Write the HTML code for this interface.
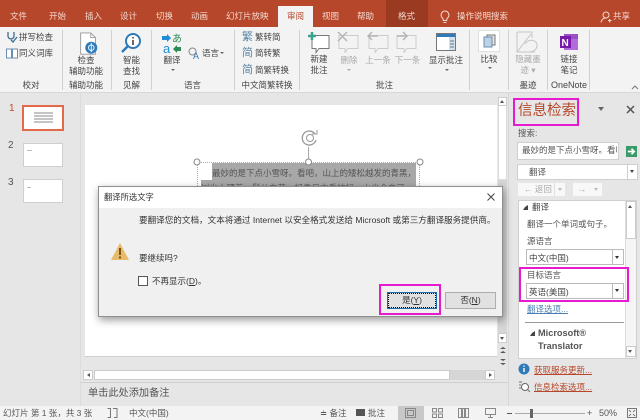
<!DOCTYPE html>
<html><head><meta charset="utf-8">
<style>
html,body{margin:0;padding:0}
#r{position:relative;width:640px;height:420px;overflow:hidden;background:#e6e6e6;font-family:"Liberation Sans","Noto Sans CJK SC",sans-serif;font-size:8.500px;color:#444;filter:blur(.3px)}
#r div,#r svg{position:absolute}
.t{white-space:nowrap;line-height:12px}
.c{text-align:center;white-space:nowrap;line-height:12px}
.tab{top:10px;color:#f3d9d0;font-size:8.500px;line-height:12px;white-space:nowrap}
.sep{top:30px;width:1px;height:60px;background:#d0d0d0}
.g{color:#aaa}
</style></head><body><div id="r">
<!-- title bar -->
<div style="left:0;top:0;width:640px;height:27px;background:#b7472a"></div>
<div style="left:278px;top:6px;width:35px;height:22px;background:#f3f3f3"></div>
<div style="left:386px;top:0;width:42px;height:27px;background:#9a3a20"></div>
<div class="tab" style="left:10px">文件</div>
<div class="tab" style="left:49px">开始</div>
<div class="tab" style="left:85px">插入</div>
<div class="tab" style="left:120px">设计</div>
<div class="tab" style="left:156px">切换</div>
<div class="tab" style="left:191px">动画</div>
<div class="tab" style="left:226px">幻灯片放映</div>
<div class="tab" style="left:287px;color:#b7472a">审阅</div>
<div class="tab" style="left:322px">视图</div>
<div class="tab" style="left:357px">帮助</div>
<div class="tab" style="left:398px">格式</div>
<svg style="left:438px;top:10px" width="14" height="14" viewBox="0 0 14 14"><path d="M7 1a4 4 0 0 0-2.500 7c.7.700.8 1.500.8 2.500h3.400c0-1 .1-1.800.8-2.500A4 4 0 0 0 7 1zM5.500 12.500h3" fill="none" stroke="#f3d9d0"/></svg>
<div class="tab" style="left:457px">操作说明搜索</div>
<svg style="left:600px;top:11px" width="12" height="12" viewBox="0 0 12 12"><circle cx="6" cy="4" r="3" fill="none" stroke="#f3d9d0"/><path d="M1 11.500c.5-3 2.500-4.500 5-4.500M8 9.500h3.500M9.700 8v3.500" fill="none" stroke="#f3d9d0"/></svg>
<div class="tab" style="left:613px;top:10px">共享</div>

<!-- ribbon -->
<div style="left:0;top:27px;width:640px;height:65px;background:#f3f3f3;border-bottom:1px solid #d8d8d8"></div>
<div class="sep" style="left:62px"></div>
<div class="sep" style="left:111px"></div>
<div class="sep" style="left:151px"></div>
<div class="sep" style="left:234px"></div>
<div class="sep" style="left:299px"></div>
<div class="sep" style="left:469px"></div>
<div class="sep" style="left:508px"></div>
<div class="sep" style="left:547px"></div>
<div class="sep" style="left:589px"></div>

<!-- proofing -->
<svg style="left:6px;top:31px" width="12" height="12" viewBox="0 0 12 12"><path d="M2 1v4a3 3 0 0 0 6 0V1M5 9l2 2 4-5" fill="none" stroke="#3f6f8f" stroke-width="1.300"/></svg>
<div class="t" style="left:19px;top:31px">拼写检查</div>
<svg style="left:6px;top:48px" width="12" height="11" viewBox="0 0 12 11"><path d="M.5 1h5v9h-5zM6.500 1h5v9h-5z" fill="#fff" stroke="#6a8fb0"/></svg>
<div class="t" style="left:19px;top:47px">同义词库</div>
<div class="c" style="left:0;width:62px;top:79px">校对</div>

<!-- accessibility -->
<svg style="left:78px;top:32px" width="21" height="24" viewBox="0 0 22 26"><path d="M2.500 1h11l5 5v18h-16z" fill="#fff" stroke="#999"/><path d="M13.500 1v5h5" fill="none" stroke="#999"/><circle cx="14" cy="17" r="6.500" fill="#2f7ab8"/><circle cx="14" cy="17" r="3" fill="none" stroke="#fff"/><path d="M14 12v10" stroke="#fff"/></svg>
<div class="c" style="left:65px;width:42px;top:55px;line-height:10.500px">检查<br>辅助功能</div>
<div class="c" style="left:65px;width:42px;top:79px">辅助功能</div>

<!-- insights -->
<svg style="left:120px;top:32px" width="22" height="22" viewBox="0 0 22 22"><circle cx="13" cy="9" r="7" fill="#fff" stroke="#2f7ab8" stroke-width="2"/><path d="M8 14l-6 6" stroke="#2f7ab8" stroke-width="2.500"/><path d="M13 8v5M13 5v1.500" stroke="#444" stroke-width="1.600"/></svg>
<div class="c" style="left:114px;width:35px;top:55px;line-height:10.500px">智能<br>查找</div>
<div class="c" style="left:114px;width:35px;top:79px">见解</div>

<!-- language -->
<svg style="left:161px;top:32px" width="22" height="22" viewBox="0 0 22 22"><text x="11" y="10" font-size="10" fill="#2e8b57" font-family="Noto Sans CJK JP">あ</text><text x="2" y="21" font-size="13" fill="#1e8dd6" font-family="Liberation Sans">a</text><path d="M1 4h5V2l4 4-4 4V8H1z" fill="#1e8dd6"/><path d="M20 15v4h-4v2l-4-4 4-4v2z" fill="#2e8b57"/></svg>
<div class="c" style="left:155px;width:34px;top:54px">翻译</div>
<div style="left:171px;top:69px;border:2px solid transparent;border-top:2px solid #666"></div>
<svg style="left:188px;top:47px" width="13" height="13" viewBox="0 0 13 13"><circle cx="4.500" cy="4.500" r="3.500" fill="none" stroke="#888"/><text x="5" y="12" font-size="9" fill="#2f7ab8" font-family="Liberation Sans">A</text></svg>
<div class="t" style="left:202px;top:47px">语言</div>
<div style="left:220px;top:52px;border:2px solid transparent;border-top:2px solid #666"></div>
<div class="c" style="left:151px;width:83px;top:79px">语言</div>

<!-- chinese conversion -->
<div class="t" style="left:242px;top:31px;color:#5b87a8;font-size:11px">繁</div>
<div class="t" style="left:255px;top:31px">繁转简</div>
<div class="t" style="left:242px;top:47px;color:#5b87a8;font-size:11px">简</div>
<div class="t" style="left:255px;top:47px">简转繁</div>
<div class="t" style="left:242px;top:64px;color:#5b87a8;font-size:11px">简</div>
<div class="t" style="left:255px;top:64px">简繁转换</div>
<div class="c" style="left:236px;width:62px;top:79px">中文简繁转换</div>

<!-- comments -->
<svg style="left:306px;top:31px" width="24" height="24" viewBox="0 0 24 24"><path d="M6 4.500h17v13H13l-3 4v-4H6z" fill="#fff" stroke="#777"/><path d="M6 1v8M2 5h8" stroke="#3aa28d" stroke-width="2.500"/></svg>
<div class="c" style="left:304px;width:30px;top:54px;line-height:11px">新建<br>批注</div>
<svg style="left:337px;top:31px" width="22" height="22" viewBox="0 0 22 22"><path d="M2 4.500h19v13H11l-3 4v-4H2z" fill="none" stroke="#ccc"/><path d="M1 1l9 9M10 1l-9 9" stroke="#b5b5b5" stroke-width="1.500"/></svg>
<div class="c g" style="left:333px;width:32px;top:54px">删除</div>
<div style="left:347px;top:69px;border:2px solid transparent;border-top:2px solid #aaa"></div>
<svg style="left:367px;top:31px" width="22" height="22" viewBox="0 0 22 22"><path d="M2 4.500h19v13H11l-3 4v-4H2z" fill="none" stroke="#ccc"/><path d="M11 5H2M5 1L1 5l4 4" fill="none" stroke="#b5b5b5" stroke-width="1.500"/></svg>
<div class="c g" style="left:364px;width:28px;top:54px">上一条</div>
<svg style="left:396px;top:31px" width="22" height="22" viewBox="0 0 22 22"><path d="M1 4.500h19v13H11l-3 4v-4H1z" fill="none" stroke="#ccc"/><path d="M1 5h9M7 1l4 4-4 4" fill="none" stroke="#b5b5b5" stroke-width="1.500"/></svg>
<div class="c g" style="left:393.500px;width:28px;top:54px">下一条</div>
<svg style="left:436px;top:33px" width="20" height="18" viewBox="0 0 20 18"><rect x=".5" y=".5" width="19" height="17" fill="#fff" stroke="#777"/><rect x="1" y="1" width="18" height="3" fill="#2f7ab8"/><rect x="13" y="4" width="6" height="13" fill="#cfe0ef"/><path d="M14 8h4M14 11h4M14 14h4" stroke="#777"/></svg>
<div class="c" style="left:426px;width:40px;top:54px">显示批注</div>
<div style="left:445px;top:69px;border:2px solid transparent;border-top:2px solid #666"></div>
<div class="c" style="left:300px;width:169px;top:79px">批注</div>

<!-- compare -->
<div style="left:478px;top:30px;width:20px;height:20px;background:#fff;border:1px solid #e0e0e0"></div>
<svg style="left:483px;top:34px" width="13" height="14" viewBox="0 0 13 14"><path d="M4 1h8v10H4z" fill="#e5e5e5" stroke="#777"/><path d="M1 3h8v10H1z" fill="#bcd3e6" stroke="#6a8fb0"/></svg>
<div class="c" style="left:471px;width:36px;top:53px">比较</div>
<div style="left:488px;top:67px;border:2px solid transparent;border-top:2px solid #666"></div>

<!-- ink -->
<svg style="left:516px;top:31px" width="24" height="22" viewBox="0 0 24 22"><path d="M1 1h15v6M1 1v20h18M1 21L15 3M9 13c4-6 12-4 12 1s-4 7-8 7" fill="none" stroke="#c4c4c4"/></svg>
<div class="c g" style="left:511px;width:34px;top:54px;line-height:11px">隐藏墨<br>迹 ▾</div>
<div class="c" style="left:511px;width:34px;top:79px">墨迹</div>

<!-- onenote -->
<svg style="left:559px;top:33px" width="20" height="18" viewBox="0 0 20 18"><rect x="5" y="1" width="14" height="16" fill="#b46ad8"/><rect x="5" y="1" width="14" height="5" fill="#9b4fc4"/><rect x="1" y="3" width="11" height="12" fill="#7719aa"/><text x="2.500" y="13" font-size="10" font-weight="bold" fill="#fff" font-family="Liberation Sans">N</text></svg>
<div class="c" style="left:551px;width:36px;top:54px;line-height:11px">链接<br>笔记</div>
<div class="c" style="left:549px;width:40px;top:79px;font-size:9px">OneNote</div>
<svg style="left:631px;top:85px" width="8" height="5" viewBox="0 0 8 5"><path d="M1 4l3-3 3 3" fill="none" stroke="#777"/></svg>

<!-- thumbnails -->
<div style="left:80px;top:93px;width:1px;height:313px;background:#dcdcdc"></div>
<div class="t" style="left:9px;top:103px;font-size:10px;color:#c3482b">1</div>
<div style="left:22px;top:105px;width:38px;height:22px;background:#fff;border:2px solid #e2694a"></div>
<div style="left:34px;top:112px;width:19px;height:12px;background:repeating-linear-gradient(#c4c4c4 0 2px,#fff 2px 3px)"></div>
<div class="t" style="left:8px;top:140px;font-size:10px;color:#555">2</div>
<div style="left:23px;top:143px;width:38px;height:22px;background:#fff;border:1px solid #cfcfcf"></div>
<div style="left:27px;top:150px;width:5px;height:1px;background:#bbb"></div>
<div class="t" style="left:8px;top:177px;font-size:10px;color:#555">3</div>
<div style="left:23px;top:179px;width:38px;height:22px;background:#fff;border:1px solid #cfcfcf"></div>
<div style="left:27px;top:187px;width:4px;height:1px;background:#bbb"></div>

<!-- slide -->
<div style="left:85px;top:105px;width:412px;height:251px;background:#fff;border-bottom:1px solid #cfcfcf"></div>
<svg style="left:301px;top:129px" width="18" height="18" viewBox="0 0 18 18"><path d="M14 5a7 7 0 1 0 1 6" fill="none" stroke="#999" stroke-width="1.300"/><circle cx="9" cy="9" r="3.500" fill="none" stroke="#999"/><path d="M11 5h5V1" fill="none" stroke="#999"/></svg>
<div style="left:308px;top:147px;width:1px;height:14px;background:#aaa"></div>
<div style="left:197px;top:162px;width:223px;height:100px;border:1px dotted #aaa;box-sizing:border-box"></div>
<div style="left:212px;top:163px;width:204px;height:17px;background:#a8a8a8"></div>
<div style="left:201px;top:180px;width:215px;height:10px;background:#a8a8a8"></div>
<div class="t" style="left:212px;top:167px;color:#555">最妙的是下点小雪呀。看吧，山上的矮松越发的青黑，</div>
<div class="t" style="left:201px;top:182px;color:#555">树尖上顶着一髻儿白花，好像日本看护妇。山尖全白了</div>
<svg style="left:192px;top:157px" width="240" height="12" viewBox="0 0 240 12"><circle cx="5" cy="5" r="3" fill="#fff" stroke="#888"/><circle cx="116.500" cy="5" r="3" fill="#fff" stroke="#888"/><circle cx="228" cy="5" r="3" fill="#fff" stroke="#888"/></svg>

<!-- main vertical scrollbar -->
<div style="left:498px;top:105px;width:9px;height:75px;background:#fff;border:1px solid #dcdcdc;box-sizing:border-box"></div>
<div style="left:498px;top:180px;width:9px;height:153px;background:#d6d6d6"></div>
<div style="left:498px;top:97px;width:9px;height:9px;background:#fff;border:1px solid #ccc;box-sizing:border-box"></div>
<div style="left:500px;top:98px;border:2.500px solid transparent;border-bottom:3px solid #555"></div>
<div style="left:498px;top:333px;width:9px;height:10px;background:#fff;border:1px solid #ccc;box-sizing:border-box"></div>
<div style="left:500px;top:337px;border:2.500px solid transparent;border-top:3px solid #555"></div>
<svg style="left:499px;top:346px" width="8" height="20" viewBox="0 0 8 20"><path d="M1 3l3-2 3 2zM1 7l3-2 3 2zM1 13l3 2 3-2zM1 17l3 2 3-2z" fill="#555"/></svg>

<!-- h scrollbar -->
<div style="left:94px;top:370px;width:356px;height:10px;background:#fff;border:1px solid #ccc;box-sizing:border-box"></div>
<div style="left:450px;top:370px;width:35px;height:10px;background:#d6d6d6"></div>
<div style="left:83px;top:370px;width:10px;height:10px;background:#fff;border:1px solid #ccc;box-sizing:border-box"></div>
<div style="left:85px;top:373px;border:2px solid transparent;border-right:3px solid #555"></div>
<div style="left:485px;top:370px;width:10px;height:10px;background:#fff;border:1px solid #ccc;box-sizing:border-box"></div>
<div style="left:489px;top:373px;border:2px solid transparent;border-left:3px solid #555"></div>
<div style="left:81px;top:382px;width:427px;height:1px;background:#d0d0d0"></div>
<div class="t" style="left:88px;top:388px;font-size:10.200px;color:#555">单击此处添加备注</div>

<!-- Task pane -->
<div style="left:508px;top:93px;width:1px;height:313px;background:#d8d8d8"></div>
<div style="left:513px;top:98px;width:66px;height:28px;border:2px solid #e61ad0;box-sizing:border-box"></div>
<div class="t" style="left:518px;top:103px;font-size:14.500px;line-height:17px;color:#b7472a">信息检索</div>
<div style="left:598px;top:107px;border:3px solid transparent;border-top:4px solid #666"></div>
<svg style="left:626px;top:105px" width="9" height="9" viewBox="0 0 9 9"><path d="M1 1l7 7M8 1L1 8" stroke="#555" stroke-width="1.500"/></svg>
<div class="t" style="left:518px;top:127px;color:#555">搜索:</div>
<div style="left:517px;top:142px;width:102px;height:18px;background:#fff;border:1px solid #cfcfcf;box-sizing:border-box"></div>
<div class="t" style="left:522px;top:144px;color:#555;width:95px;overflow:hidden">最妙的是下点小雪呀。看吧</div>
<div style="left:626px;top:146px;width:11px;height:11px;background:#3a9a6a"></div>
<svg style="left:626px;top:146px" width="11" height="11" viewBox="0 0 12 12"><path d="M2 6h7M6 3l3 3-3 3" fill="none" stroke="#fff" stroke-width="1.800"/></svg>
<div style="left:517px;top:164px;width:121px;height:16px;background:#fff;border:1px solid #cfcfcf;box-sizing:border-box"></div>
<div class="t" style="left:529px;top:166px;color:#555">翻译</div>
<div style="left:627px;top:164px;width:1px;height:16px;background:#cfcfcf"></div>
<div style="left:630px;top:170px;border:2.500px solid transparent;border-top:3px solid #444"></div>
<div style="left:518px;top:183px;width:47px;height:13px;background:#f8f8f8"></div>
<div class="t g" style="left:524px;top:183px;font-size:8.500px">← 返回</div>
<div style="left:554px;top:183px;width:1px;height:13px;background:#e0e0e0"></div>
<div style="left:558px;top:188px;border:2px solid transparent;border-top:3px solid #bbb"></div>
<div style="left:573px;top:183px;width:29px;height:13px;background:#f8f8f8"></div>
<div class="t g" style="left:578px;top:183px">→</div>
<div style="left:594px;top:188px;border:2px solid transparent;border-top:3px solid #bbb"></div>

<!-- results box -->
<div style="left:518px;top:200px;width:119px;height:159px;background:#fff;border:1px solid #d0d0d0;box-sizing:border-box"></div>
<div style="left:625px;top:201px;width:11px;height:157px;background:#f5f5f5;border-left:1px solid #ddd;box-sizing:border-box"></div>
<div style="left:626px;top:201px;width:10px;height:38px;background:#fff;border:1px solid #ccc;box-sizing:border-box"></div>
<div style="left:628px;top:203px;border:2.500px solid transparent;border-bottom:3px solid #555"></div>
<div style="left:626px;top:346px;width:10px;height:11px;background:#fff;border:1px solid #ccc;box-sizing:border-box"></div>
<div style="left:628px;top:350px;border:2.500px solid transparent;border-top:3px solid #555"></div>
<div style="left:523px;top:205px;border:2px solid transparent;border-right:3px solid #444;border-bottom:3px solid #444"></div>
<div class="t" style="left:532px;top:201px;color:#444">翻译</div>
<div class="t" style="left:527px;top:218px;color:#555">翻译一个单词或句子。</div>
<div class="t" style="left:527px;top:235px;color:#555">源语言</div>
<div style="left:526px;top:249px;width:98px;height:16px;background:#fff;border:1px solid #bbb;box-sizing:border-box"></div>
<div class="t" style="left:529px;top:252px;color:#444">中文(中国)</div>
<div style="left:612px;top:249px;width:1px;height:16px;background:#bbb"></div>
<div style="left:615px;top:256px;border:2.500px solid transparent;border-top:3px solid #333"></div>
<div class="t" style="left:527px;top:269px;color:#555">目标语言</div>
<div style="left:526px;top:283px;width:98px;height:16px;background:#fff;border:1px solid #bbb;box-sizing:border-box"></div>
<div class="t" style="left:529px;top:286px;color:#444">英语(美国)</div>
<div style="left:612px;top:283px;width:1px;height:16px;background:#bbb"></div>
<div style="left:615px;top:289px;border:2.500px solid transparent;border-top:3px solid #333"></div>
<div style="left:519px;top:267px;width:110px;height:35px;border:2px solid #e61ad0;box-sizing:border-box"></div>
<div class="t" style="left:527px;top:303px;color:#4a7fb5;text-decoration:underline">翻译选项...</div>
<div style="left:525px;top:322px;width:99px;height:1px;background:#999"></div>
<div style="left:530px;top:331px;border:2px solid transparent;border-right:3px solid #444;border-bottom:3px solid #444"></div>
<div class="t" style="left:538px;top:327px;font-size:9.200px;font-weight:bold;color:#555">Microsoft®</div>
<div class="t" style="left:538px;top:340px;font-size:9.200px;font-weight:bold;color:#555">Translator</div>
<svg style="left:518px;top:363px" width="12" height="12" viewBox="0 0 12 12"><circle cx="6" cy="6" r="5.500" fill="#2f7ab8"/><path d="M6 5v4M6 2.500v1.300" stroke="#fff" stroke-width="1.400"/></svg>
<div class="t" style="left:534px;top:364px;color:#b7472a;text-decoration:underline">获取服务更新...</div>
<svg style="left:518px;top:381px" width="13" height="12" viewBox="0 0 13 12"><circle cx="7" cy="6" r="3.500" fill="#fff" stroke="#666"/><path d="M9.500 8.500L12 11M1 1h3M1 4h2M1 7h2" stroke="#777"/></svg>
<div class="t" style="left:534px;top:381px;color:#b7472a;text-decoration:underline">信息检索选项...</div>

<!-- dialog -->
<div style="left:98px;top:186px;width:405px;height:131px;background:#f0f0f0;border:1px solid #8f8f8f;box-sizing:border-box;box-shadow:1px 3px 8px rgba(0,0,0,.4)"></div>
<div style="left:99px;top:187px;width:403px;height:21px;background:#fff"></div>
<div class="t" style="left:104px;top:191px;font-size:8.300px;color:#333">翻译所选文字</div>
<svg style="left:487px;top:193px" width="8" height="8" viewBox="0 0 8 8"><path d="M.5.500l7 7M7.500.500l-7 7" stroke="#444"/></svg>
<div class="t" style="left:139px;top:214px;font-size:8.580px;color:#333">要翻译您的文档，文本将通过 Internet 以安全格式发送给 Microsoft 或第三方翻译服务提供商。</div>
<svg style="left:110px;top:242px" width="20" height="19" viewBox="0 0 20 19"><path d="M10 1l9 17H1z" fill="#e8ba6c"/><path d="M10 6v7M10 14.500v2" stroke="#6b4a10" stroke-width="1.800"/></svg>
<div class="t" style="left:139px;top:252px;color:#333">要继续吗?</div>
<div style="left:138px;top:276px;width:8px;height:8px;background:#fff;border:1px solid #555"></div>
<div class="t" style="left:152px;top:275px;color:#333">不再显示(<u>D</u>)。</div>
<div style="left:387px;top:292px;width:50px;height:17px;background:#e1e1e1;border:1px solid #1c6db0;outline:1px dotted #111;outline-offset:-2px;box-sizing:border-box"></div>
<div class="c" style="left:387px;top:294px;width:50px;color:#333">是(<u>Y</u>)</div>
<div style="left:445px;top:292px;width:51px;height:17px;background:#e1e1e1;border:1px solid #adadad;box-sizing:border-box"></div>
<div class="c" style="left:445px;top:294px;width:51px;color:#333">否(<u>N</u>)</div>
<div style="left:379px;top:284px;width:62px;height:31px;border:2px solid #e61ad0;box-sizing:border-box"></div>

<!-- status bar -->
<div style="left:0;top:406px;width:640px;height:14px;background:#f3f3f3"></div>
<div class="t" style="left:3px;top:407px;color:#555">幻灯片 第 1 张，共 3 张</div>
<svg style="left:107px;top:408px" width="11" height="10" viewBox="0 0 11 10"><path d="M.5.500h3v9h-3M6 .5h4v9H7" fill="none" stroke="#777"/></svg>
<div class="t" style="left:129px;top:407px;color:#555">中文(中国)</div>
<div class="t" style="left:320px;top:407px;color:#555">≐ 备注</div>
<div style="left:356px;top:409px;width:9px;height:7px;background:#555"></div>
<div class="t" style="left:368px;top:407px;color:#555">批注</div>
<div style="left:398px;top:406px;width:26px;height:14px;background:#c8c8c8"></div>
<svg style="left:405px;top:408px" width="11" height="10" viewBox="0 0 11 10"><path d="M.5.500h10v9H.5zM2.500 2.500h6v5h-6z" fill="none" stroke="#888"/></svg>
<svg style="left:432px;top:408px" width="11" height="10" viewBox="0 0 11 10"><path d="M.5.500h4v3.500h-4zM6.500.500h4v3.500h-4zM.5 6h4v3.500h-4zM6.500 6h4v3.500h-4z" fill="none" stroke="#888"/></svg>
<svg style="left:458px;top:408px" width="11" height="10" viewBox="0 0 11 10"><path d="M.5.500h3v9h-3zM4.500.500h2v9h-2zM7.500.500h3v9h-3z" fill="none" stroke="#888"/></svg>
<svg style="left:485px;top:408px" width="11" height="10" viewBox="0 0 11 10"><path d="M.5.500h10v6H.5zM5.500 6.500v3M3 9.500h5" fill="none" stroke="#888"/></svg>
<div style="left:507px;top:413px;width:5px;height:1px;background:#555"></div>
<div style="left:515px;top:413px;width:70px;height:1px;background:#aaa"></div>
<div style="left:530px;top:409px;width:3px;height:9px;background:#666"></div>
<div class="t" style="left:587px;top:407px;font-size:9px;color:#555">+</div>
<div class="t" style="left:599px;top:407px;font-size:9px;color:#555">50%</div>
<svg style="left:627px;top:408px" width="10" height="10" viewBox="0 0 10 10"><path d="M.5.500h9v9h-9zM2 2l2 2M8 2L6 4M2 8l2-2M8 8L6 6" fill="none" stroke="#777"/></svg>
</div></body></html>
